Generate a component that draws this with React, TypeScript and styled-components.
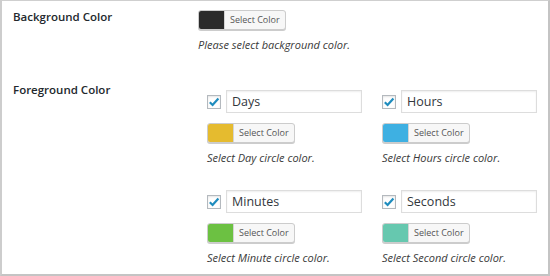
import styled, { createGlobalStyle } from "styled-components";

type TimeUnit = {
  label: string;
  swatch: string;
  description: string;
};

const units: TimeUnit[] = [
  { label: "Days", swatch: "#e5bb2f", description: "Select Day circle color." },
  { label: "Hours", swatch: "#3eb0e2", description: "Select Hours circle color." },
  { label: "Minutes", swatch: "#6cc142", description: "Select Minute circle color." },
  { label: "Seconds", swatch: "#66c8af", description: "Select Second circle color." },
];

const ColorButton = ({ swatch }: { swatch: string }) => (
  <PickerButton>
    <Swatch $color={swatch} />
    <PickerText>Select Color</PickerText>
  </PickerButton>
);

const CheckMark = () => (
  <svg width="12" height="12" viewBox="0 0 12 12">
    <path d="M1.8 6.2 L4.6 9 L10.4 2.4" fill="none" stroke="#1e8cbe" strokeWidth="2.2" />
  </svg>
);

const App = () => {
  return (
    <>
      <GlobalStyle />
      <Panel>
        <SettingRow>
          <Label>Background Color</Label>
          <Field>
            <ColorButton swatch="#2b2b2b" />
            <Description>Please select background color.</Description>
          </Field>
        </SettingRow>

        <SettingRow $top={29}>
          <Label>Foreground Color</Label>
          <UnitGrid>
            {units.map((unit) => (
              <UnitGroup key={unit.label}>
                <CheckLine>
                  <CheckBox>
                    <CheckMark />
                  </CheckBox>
                  <TextInput defaultValue={unit.label} />
                </CheckLine>
                <ColorButton swatch={unit.swatch} />
                <Description>{unit.description}</Description>
              </UnitGroup>
            ))}
          </UnitGrid>
        </SettingRow>
      </Panel>
    </>
  );
};

export default App;

const GlobalStyle = createGlobalStyle`
  html, body {
    margin: 0;
    padding: 0;
    background: #ffffff;
  }
  body {
    font-family: "Open Sans", "Noto Sans", sans-serif;
    color: #23282d;
  }
`;

const Panel = styled.div`
  box-sizing: border-box;
  width: 550px;
  height: 276px;
  border: 1px solid #cfcfcf;
  border-left: 2px solid #cdcdcd;
  border-right: 2px solid #c4c4c4;
  border-bottom: 2px solid #c4c4c4;
  padding: 8px 0 0 11px;
  overflow: hidden;
`;

const SettingRow = styled.div<{ $top?: number }>`
  display: flex;
  margin-top: ${(p) => p.$top ?? 0}px;
`;

const Label = styled.div`
  width: 185px;
  flex-shrink: 0;
  font-size: 11.5px;
  font-weight: 600;
  line-height: 16px;
  color: #23282d;
`;

const Field = styled.div`
  display: flex;
  flex-direction: column;
  align-items: flex-start;
  padding-top: 1px;
`;

const PickerButton = styled.div`
  display: flex;
  height: 20px;
  box-sizing: border-box;
  border: 1px solid #cccccc;
  border-radius: 3px;
  background: #f7f7f7;
  box-shadow: 0 1px 0 #cccccc;
  overflow: hidden;
`;

const Swatch = styled.span<{ $color: string }>`
  width: 25px;
  background: ${(p) => p.$color};
`;

const PickerText = styled.span`
  padding: 0 5px;
  font-size: 9px;
  line-height: 18px;
  color: #555555;
  border-left: 1px solid #d4d4d4;
`;

const Description = styled.p`
  margin: 7px 0 0;
  font-size: 11px;
  font-style: italic;
  line-height: 16px;
  color: #3a3a3a;
`;

const UnitGrid = styled.div`
  display: grid;
  grid-template-columns: 175px 160px;
  row-gap: 24px;
  padding: 8px 0 0 9px;
`;

const UnitGroup = styled.div`
  display: flex;
  flex-direction: column;
  align-items: flex-start;
`;

const CheckLine = styled.div`
  display: flex;
  align-items: center;
  gap: 5px;
  margin-bottom: 10px;
`;

const CheckBox = styled.span`
  box-sizing: border-box;
  width: 14px;
  height: 14px;
  border: 1px solid #b4b9be;
  background: #fefefe;
  display: flex;
  align-items: center;
  justify-content: center;
  box-shadow: inset 0 1px 2px rgba(0, 0, 0, 0.1);
`;

const TextInput = styled.input`
  box-sizing: border-box;
  width: 136px;
  height: 23px;
  border: 1px solid #dddddd;
  box-shadow: inset 0 1px 2px rgba(0, 0, 0, 0.07);
  padding: 0 5px;
  font-family: "Open Sans", "Noto Sans", sans-serif;
  font-size: 12.5px;
  color: #32373c;
  background: #ffffff;
  outline: none;
`;
